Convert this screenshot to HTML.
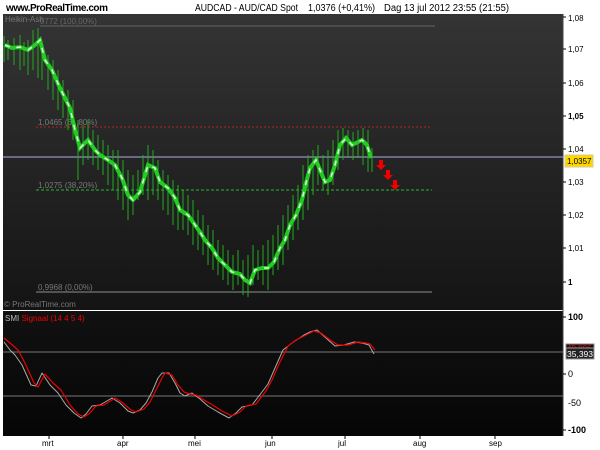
<!DOCTYPE html>
<html><head><meta charset="utf-8"><style>
body{margin:0;width:600px;height:450px;background:#fff;overflow:hidden;font-family:"Liberation Sans",sans-serif}
svg{position:absolute;left:0;top:0}
</style></head><body>
<svg width="600" height="450" viewBox="0 0 600 450" font-family="Liberation Sans, sans-serif">
<defs>
<linearGradient id="g" x1="0" y1="0" x2="0" y2="1"><stop offset="0" stop-color="#343434"/><stop offset="1" stop-color="#141414"/></linearGradient>
<linearGradient id="g2" x1="0" y1="0" x2="0" y2="1"><stop offset="0" stop-color="#111"/><stop offset="1" stop-color="#060606"/></linearGradient>
</defs>
<text x="6" y="11" font-size="10" font-weight="bold" fill="#000" textLength="102">www.ProRealTime.com</text>
<text x="195" y="11" font-size="10" fill="#000" textLength="103" lengthAdjust="spacingAndGlyphs">AUDCAD - AUD/CAD Spot</text>
<text x="308" y="11" font-size="10" fill="#000" textLength="67" lengthAdjust="spacingAndGlyphs">1,0376 (+0,41%)</text>
<text x="384" y="11" font-size="10" fill="#000" textLength="125" lengthAdjust="spacingAndGlyphs">Dag  13 jul 2012 23:55 (21:55)</text>
<rect x="3" y="14" width="560" height="296" fill="url(#g)"/>
<rect x="3" y="311" width="560" height="125" fill="url(#g2)"/>
<line x1="563" y1="14" x2="563" y2="436" stroke="#444"/>
<text x="5" y="22" font-size="8" fill="#777">Heikin-Ash</text>
<text x="40" y="24" font-size="8" fill="#666">0772 (100,00%)</text>
<line x1="40" y1="26" x2="435" y2="26" stroke="#666"/>
<line x1="36" y1="127" x2="432" y2="127" stroke="#b22" stroke-dasharray="2,2"/>
<text x="38" y="125" font-size="8" fill="#777">1,0465 (61,80%)</text>
<line x1="3" y1="157" x2="563" y2="157" stroke="#8080a8" stroke-width="1.5"/>
<line x1="36" y1="190" x2="432" y2="190" stroke="#2b2" stroke-dasharray="3,2"/>
<text x="38" y="188" font-size="8" fill="#777">1,0275 (38,20%)</text>
<line x1="36" y1="292" x2="432" y2="292" stroke="#666" stroke-width="1.5"/>
<text x="38" y="290" font-size="8" fill="#777">0,9968 (0,00%)</text>
<text x="4" y="307" font-size="8" fill="#777">© ProRealTime.com</text>
<g fill="none" stroke-linejoin="miter">
<path d="M4,36V62 M8,40V60 M14,38V65 M20,35V70 M24,42V66 M28,40V75 M33,30V70 M38,28V78 M42,45V80 M48,55V90 M53,60V100 M58,70V110 M63,80V118 M68,90V130 M73,100V140 M78,120V180 M83,125V165 M88,120V160 M93,130V165 M98,135V170 M103,140V175 M108,145V185 M113,150V190 M118,150V200 M123,160V210 M128,170V220 M133,175V215 M138,170V200 M143,155V195 M148,145V200 M153,150V195 M158,160V200 M163,170V210 M168,175V215 M173,180V225 M178,185V230 M183,190V230 M188,195V235 M193,200V245 M198,210V250 M203,215V255 M208,225V265 M213,230V270 M218,240V275 M223,245V280 M228,250V285 M233,255V290 M238,250V285 M243,260V295 M248,255V297 M253,245V285 M258,250V280 M263,245V285 M268,240V290 M273,235V275 M278,225V270 M283,215V265 M288,205V250 M293,195V240 M298,185V230 M303,165V220 M308,155V210 M313,150V195 M318,145V185 M323,155V190 M328,150V195 M333,140V185 M338,130V170 M343,128V160 M348,130V158 M353,132V160 M358,130V158 M363,128V165 M368,130V172 M372,148V172" stroke="#2a2" stroke-width="1"/>
<path d="M5,45 L12,48 L20,47 L28,50 L35,45 L40,40 L45,60 L52,70 L60,88 L66,100 L70,108 L75,130 L80,148 L88,140 L95,150 L100,155 L108,160 L115,165 L122,178 L128,195 L133,200 L140,192 L148,165 L155,168 L160,182 L168,188 L175,198 L180,210 L188,215 L195,225 L200,232 L205,240 L212,248 L218,258 L225,265 L232,272 L240,274 L245,280 L250,283 L255,270 L262,268 L268,268 L274,262 L280,248 L285,240 L290,225 L296,215 L302,200 L306,183 L310,168 L316,160 L320,170 L325,182 L330,180 L335,165 L340,145 L346,138 L352,145 L358,142 L362,140 L367,145 L371,158" stroke="#2c2" stroke-width="4"/>
<path d="M5,45 L12,48 L20,47 L28,50 L35,45 L40,40 L45,60 L52,70 L60,88 L66,100 L70,108 L75,130 L80,148 L88,140 L95,150 L100,155 L108,160 L115,165 L122,178 L128,195 L133,200 L140,192 L148,165 L155,168 L160,182 L168,188 L175,198 L180,210 L188,215 L195,225 L200,232 L205,240 L212,248 L218,258 L225,265 L232,272 L240,274 L245,280 L250,283 L255,270 L262,268 L268,268 L274,262 L280,248 L285,240 L290,225 L296,215 L302,200 L306,183 L310,168 L316,160 L320,170 L325,182 L330,180 L335,165 L340,145 L346,138 L352,145 L358,142 L362,140 L367,145 L371,158" stroke="#dfd" stroke-width="1.5" stroke-dasharray="5,7"/>
</g>
<g fill="#e00">
<path d="M379,160h4v5h3l-5,5l-5,-5h3z"/>
<path d="M386,170h4v5h3l-5,5l-5,-5h3z"/>
<path d="M393,180h4v5h3l-5,5l-5,-5h3z"/>
</g>
<g font-size="8" fill="#000">
<text x="568" y="21">1,08</text><text x="568" y="52">1,07</text><text x="568" y="86">1,06</text>
<text x="568" y="119" font-weight="bold">1,05</text><text x="568" y="152">1,04</text><text x="568" y="185">1,03</text>
<text x="568" y="218">1,02</text><text x="568" y="251">1,01</text><text x="568" y="285" font-weight="bold">1</text>
</g>
<g stroke="#000"><path d="M563,17h3M563,49h3M563,83h3M563,116h3M563,149h3M563,182h3M563,215h3M563,248h3M563,282h3M563,317h3M563,374h3M563,430h3"/></g>
<rect x="565" y="155" width="28" height="12" fill="#ffd700" stroke="#cc9"/>
<text x="567" y="164" font-size="8" fill="#000">1,0357</text>
<text x="5" y="321" font-size="8" fill="#bbb">SMI <tspan fill="#e00">Signaal (14 4 5 4)</tspan></text>
<line x1="3" y1="352" x2="563" y2="352" stroke="#777"/>
<line x1="3" y1="396" x2="563" y2="396" stroke="#777"/>
<polyline fill="none" stroke="#aaa" stroke-width="1" stroke-linejoin="round" points="4,342 10,350 15,355 22,365 31,385 36,386 42,373 50,385 58,393 66,405 74,413 81,418 86,414 92,406 100,405 112,398 120,403 128,411 133,413 140,410 146,403 152,392 158,378 162,373 169,373 175,383 180,393 185,396 192,393 200,399 208,406 218,412 229,418 236,413 242,407 252,405 262,392 268,384 275,368 283,350 292,343 304,335 310,332 317,330 326,338 335,346 344,345 354,342 362,343 369,345 374,354"/>
<polyline fill="none" stroke="#e00" stroke-width="1.2" stroke-linejoin="round" points="4,338 10,343 18,350 25,363 34,383 38,387 45,374 53,383 61,390 70,405 78,414 84,417 90,413 96,406 104,405 115,398 123,403 131,410 136,412 144,409 150,402 156,390 162,378 165,373 172,375 178,385 184,392 190,394 196,395 204,400 211,404 222,411 232,416 240,412 246,406 256,404 266,391 272,380 280,362 288,346 296,340 308,334 314,331 321,333 330,340 338,345 348,345 358,342 366,343 370,344 375,350"/>
<g font-size="9" fill="#000">
<text x="568" y="320" font-weight="bold">100</text><text x="568" y="377">0</text>
<text x="568" y="406">-50</text><text x="568" y="433" font-weight="bold">-100</text>
</g>
<rect x="566" y="344" width="28" height="9" fill="#111" stroke="#888"/>
<text x="567" y="351" font-size="8" fill="#e00">49,896</text>
<rect x="566" y="348" width="28" height="11" fill="#222" stroke="#999"/>
<text x="567" y="357" font-size="8.5" fill="#fff">35,393</text>
<g font-size="8" fill="#000">
<text x="42" y="446">mrt</text><text x="117" y="446">apr</text><text x="188" y="446">mei</text>
<text x="265" y="446">jun</text><text x="338" y="446">jul</text><text x="413" y="446">aug</text><text x="489" y="446">sep</text>
</g>
<g stroke="#000"><path d="M49,436v3M123,436v3M195,436v3M272,436v3M345,436v3M420,436v3M495,436v3"/></g>
</svg>
</body></html>
